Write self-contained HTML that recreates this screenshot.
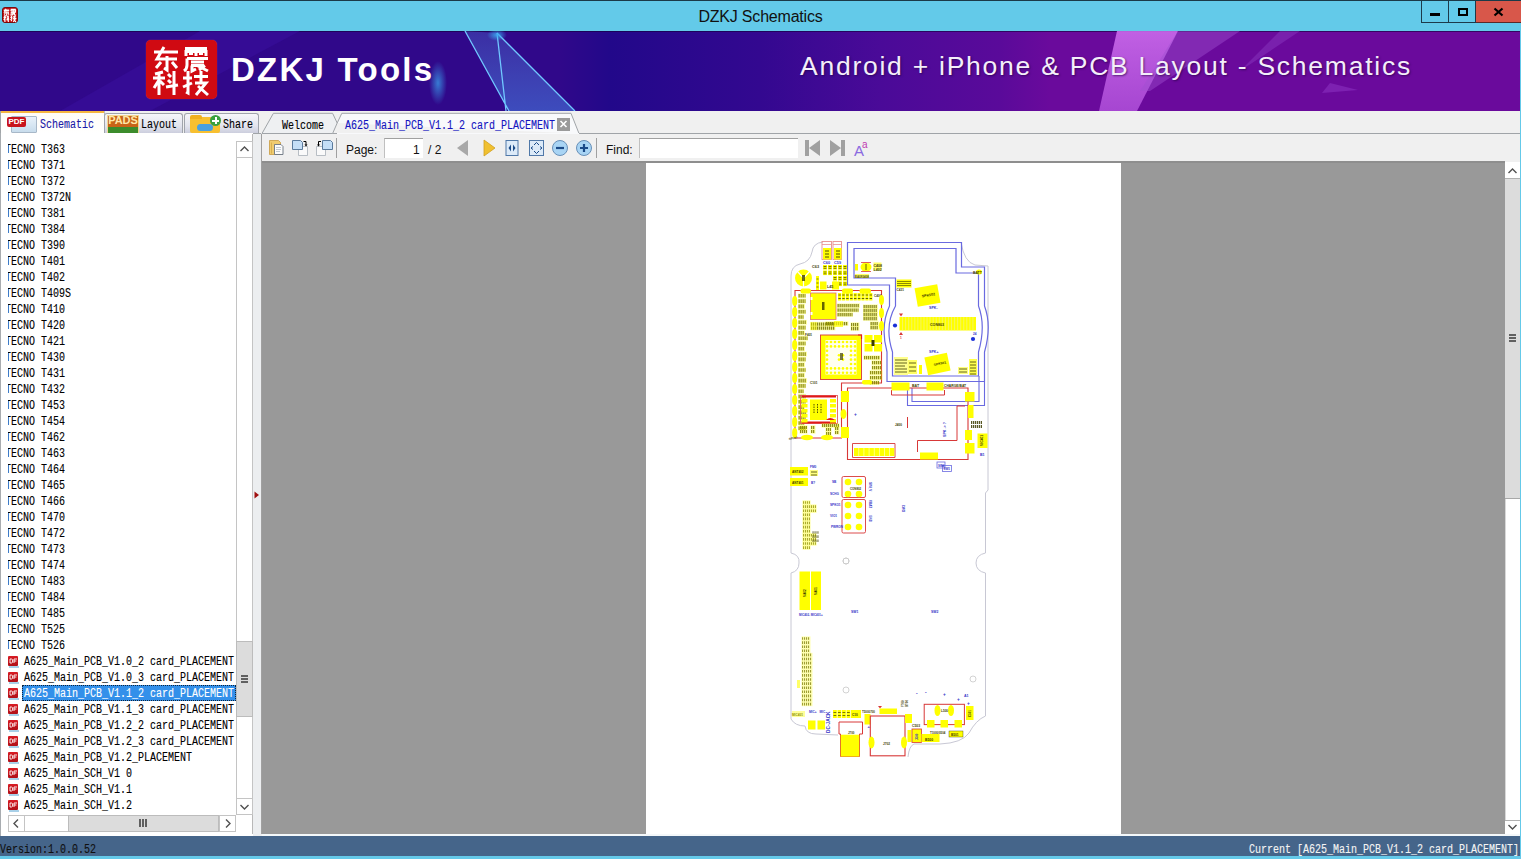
<!DOCTYPE html><html><head><meta charset="utf-8"><style>
*{margin:0;padding:0;box-sizing:border-box}
html,body{width:1521px;height:859px;overflow:hidden;background:#64c9e9;font-family:"Liberation Sans",sans-serif}
.a{position:absolute}
.m{font-family:"Liberation Mono",monospace;white-space:pre}
#title{left:0;top:0;width:1521px;height:31px;background:#63cae9;border-top:1px solid #1b3a48}
#banner{left:0;top:31px;width:1520px;height:80px;overflow:hidden;background:linear-gradient(90deg,#30088a 0,#30088a 560px,#22088a 610px,#330890 760px,#4a0a98 880px,#5a0a9a 1000px,#6a0a9c 1050px,#6a0a9c 1520px)}
#frame{left:0;top:111px;width:1520px;height:725px;background:#f0f0f0}
#status{left:0;top:836px;width:1520px;height:20px;background:#45658a}
.s{font-size:12px!important;letter-spacing:0!important;transform:scaleX(0.8333);transform-origin:0 0;-webkit-text-stroke:0.12px currentColor}
</style></head><body>
<div id="title" class="a">
<div class="a" style="left:2px;top:6px;width:16px;height:16px;background:#c00d12;border-radius:3px;border:1px solid #7a0a0a"></div>
<svg class="a" style="left:2px;top:6px" width="16" height="16" viewBox="0 0 71 59" preserveAspectRatio="none" fill="none" stroke="#fff" stroke-width="5"><g transform="translate(7,7)"><path d="M1 5H25M11 0L4 12H24M14 9V23L11 21M8 15L3 21M19 15L24 21"/></g><g transform="translate(37,7)"><path d="M2 1.5H24M3 9V4.5H23V9M13 1.5V9M4 11.5H25M4 11.5V18Q4 22 1 24M8 15H21M8 18.5H21M9 18.5V24M14 18.5L25 24"/></g><g transform="translate(7,31)"><path d="M10 1L2 3M0 7H12M6 1V24M6 9L1 17M15 3L18 6M15 9L18 12M13 16L25 14M21 0V24"/></g><g transform="translate(37,31)"><path d="M0 7H9M5 0V22M0 16L9 12M11 5.5H25M18 0V11M12 12H23L13 24M15 15L25 24"/></g></svg>
<div class="a" style="left:0;top:7px;width:1521px;text-align:center;font-size:16px;letter-spacing:-0.2px;color:#111;line-height:18px">DZKJ Schematics</div>
<div class="a" style="left:1421px;top:0;width:28px;height:22px;border:1px solid #1d3a4a;border-top:none"></div>
<div class="a" style="left:1449px;top:0;width:27px;height:22px;border-bottom:1px solid #1d3a4a;border-right:1px solid #1d3a4a"></div>
<div class="a" style="left:1476px;top:0;width:45px;height:22px;background:#d8574a;border-bottom:1px solid #5a2a2a"></div>
<div class="a" style="left:1430px;top:12px;width:10px;height:3px;background:#000"></div>
<div class="a" style="left:1458px;top:7px;width:10px;height:8px;border:2px solid #000;border-top-width:2.5px"></div>
<svg class="a" style="left:1493px;top:6px" width="11" height="10"><path d="M1.5 1.5L9.5 8.5M9.5 1.5L1.5 8.5" stroke="#000" stroke-width="2.2"/></svg>
</div>
<div id="banner" class="a">
<div class="a" style="left:0;top:0;width:1520px;height:1px;background:rgba(20,0,60,0.6)"></div>
<svg class="a" style="left:0;top:0" width="1520" height="80">
<defs>
<radialGradient id="glow1" cx="0.5" cy="0.5" r="0.5"><stop offset="0" stop-color="#3aa8f0" stop-opacity="0.9"/><stop offset="1" stop-color="#3aa8f0" stop-opacity="0"/></radialGradient>
<linearGradient id="beam1" x1="0" y1="0" x2="0" y2="1"><stop offset="0" stop-color="#5aa0f0" stop-opacity="0.25"/><stop offset="1" stop-color="#4a90f0" stop-opacity="0.5"/></linearGradient>
<linearGradient id="beam2" x1="0" y1="0" x2="0" y2="1"><stop offset="0" stop-color="#d070f0" stop-opacity="0.85"/><stop offset="1" stop-color="#c060e8" stop-opacity="0.7"/></linearGradient>
</defs>
<polygon points="200,0 300,0 150,80 60,80" fill="#3a10a0" opacity="0.5"/>
<polygon points="465,0 497,2 575,80 509,80" fill="url(#beam1)"/>
<path d="M465 0L509 80M497 2L506 80M497 2L575 80" stroke="#70c8ff" stroke-width="1.3" fill="none"/>
<ellipse cx="497" cy="4" rx="10" ry="6" fill="url(#glow1)"/>
<ellipse cx="438" cy="52" rx="9" ry="22" fill="url(#glow1)" opacity="0.8"/>
<polygon points="1117,0 1178,0 1137,80 1099,80" fill="url(#beam2)"/>
<polygon points="1178,0 1240,0 1150,60 1140,60" fill="#a050d0" opacity="0.45"/>
<polygon points="1280,0 1300,0 1240,40" fill="#9040c8" opacity="0.4"/>
<polygon points="1330,52 1358,59 1322,62" fill="#8a30c0" opacity="0.6"/>
</svg>
<div class="a" style="left:146px;top:9px;width:71px;height:59px;background:#d00a12;border-radius:5px;box-shadow:0 0 1px #f04050"></div>
<svg class="a" style="left:146px;top:9px" width="71" height="59" viewBox="0 0 71 59" fill="none" stroke="#fff" stroke-width="3" stroke-linecap="butt" stroke-linejoin="miter">
<g transform="translate(7,7)">
<path d="M1 5H25M11 0L4 12H24M14 9V23L11 21M8 15L3 21M19 15L24 21"/>
</g>
<g transform="translate(37,7)">
<path d="M2 1.5H24M3 9V4.5H23V9M13 1.5V9M6 6.5H10M16 6.5H20M4 11.5H25M4 11.5V18Q4 22 1 24M8 15H21M8 18.5H21M9 18.5V24L13 22M14 18.5L25 24M22 18.5L16 23"/>
</g>
<g transform="translate(7,31)">
<path d="M10 1L2 3M0 7H12M6 1V24M6 9L1 17M7 10L11 14M15 3L18 6M15 9L18 12M13 16L25 14M21 0V24"/>
</g>
<g transform="translate(37,31)">
<path d="M0 7H9M5 0V22L3 21M0 16L9 12M11 5.5H25M18 0V11M12 12H23L13 24M15 15L25 24"/>
</g>
</svg>
<div class="a" style="left:231px;top:18.5px;font-weight:bold;font-size:33px;letter-spacing:2.25px;color:#fff;line-height:40px">DZKJ Tools</div>
<div class="a" style="left:800px;top:19px;font-size:26.5px;letter-spacing:1.75px;color:#f4eefa;line-height:32px;text-shadow:1px 1px 2px rgba(30,0,60,0.6)">Android + iPhone &amp; PCB Layout - Schematics</div>
</div>
<div id="frame" class="a"></div>
<div class="a" style="left:262px;top:133px;width:1258px;height:1px;background:#a0a4a8"></div>
<div class="a" style="left:0;top:111px;width:105px;height:23px;background:linear-gradient(#fffdf6,#ffffff);border-left:1px solid #a0a4a8;border-right:1px solid #b8bcc0"></div>
<div class="a" style="left:1px;top:111px;width:103px;height:2px;background:#f5b640"></div>
<div class="a" style="left:104px;top:113px;width:79px;height:21px;background:linear-gradient(#f6f6fa,#e2e4ee 60%,#c9cbdb);border:1px solid #a0a4ac;border-bottom:none;border-radius:3px 3px 0 0"></div>
<div class="a" style="left:184px;top:113px;width:75px;height:21px;background:linear-gradient(#f6f6fa,#e2e4ee 60%,#c9cbdb);border:1px solid #a0a4ac;border-bottom:none;border-radius:3px 3px 0 0"></div>
<div class="a" style="left:105px;top:133px;width:156px;height:1px;background:#a0a4a8"></div>
<div class="a" style="left:11px;top:116px;width:26px;height:17px;background:linear-gradient(#e8f2fa,#c8dcec);border:1px solid #a8b8c8;border-radius:1px"></div>
<div class="a" style="left:7px;top:117px;width:19px;height:10px;background:#c8141c;border-radius:2px;color:#fff;font-size:8px;font-weight:bold;line-height:10px;text-align:center">PDF</div>
<div class="a m s" style="left:40px;top:117.5px;font-size:11px;letter-spacing:-0.6px;color:#1a1aa8;line-height:14px">Schematic</div>
<div class="a" style="left:107px;top:115px;width:32px;height:18px;background:#c86418;border:1px solid #f0d890"></div>
<div class="a" style="left:108px;top:127px;width:30px;height:6px;background:#3c8c2c"></div>
<div class="a" style="left:107px;top:114px;width:32px;font-size:11px;font-weight:bold;color:#ffe8a8;line-height:13px;text-align:center">PADS</div>
<div class="a m s" style="left:141px;top:118px;font-size:11px;letter-spacing:-0.6px;color:#000;line-height:14px">Layout</div>
<div class="a" style="left:190px;top:117px;width:30px;height:16px;background:#f8c030;border-radius:2px"></div>
<div class="a" style="left:190px;top:115px;width:12px;height:4px;background:#f0b020;border-radius:2px 2px 0 0"></div>
<div class="a" style="left:197px;top:124px;width:16px;height:7px;background:#4aa0e0;border-radius:4px"></div>
<div class="a" style="left:210px;top:115px;width:11px;height:11px;background:#3aa040;border-radius:50%"></div>
<div class="a" style="left:214.5px;top:117px;width:2px;height:7px;background:#fff"></div>
<div class="a" style="left:212px;top:119.5px;width:7px;height:2px;background:#fff"></div>
<div class="a m s" style="left:223px;top:118px;font-size:11px;letter-spacing:-0.6px;color:#000;line-height:14px">Share</div>
<svg class="a" style="left:255px;top:111px" width="340" height="24">
<path d="M7 22.5L18.4 2.3H77.6L82.2 12L77.6 22.5Z" fill="#eef0f2" stroke="#a0a4a8" stroke-width="1"/>
<path d="M82.2 12L86.8 2.3H316L324 22.5" fill="#f8f9fb" stroke="#a0a4a8" stroke-width="1"/>
<path d="M82 22.5H324" stroke="#f8f9fb" stroke-width="1.2"/>
</svg>
<div class="a m s" style="left:282px;top:118.5px;font-size:11px;letter-spacing:-0.6px;color:#000;line-height:14px">Welcome</div>
<div class="a m s" style="left:345px;top:118.5px;font-size:11px;letter-spacing:-0.6px;color:#1414c0;line-height:14px">A625_Main_PCB_V1.1_2 card_PLACEMENT</div>
<div class="a" style="left:557px;top:118px;width:13px;height:13px;background:#9a9a9a"></div>
<svg class="a" style="left:557px;top:118px" width="13" height="12"><path d="M3.5 3L9.5 9M9.5 3L3.5 9" stroke="#fff" stroke-width="1.6"/></svg>
<div class="a" style="left:0;top:133px;width:253px;height:703px;background:#fff;border-left:1px solid #a8acb0"></div>
<div class="a" style="left:252px;top:134px;width:1px;height:700px;background:#b8b8b8"></div>
<div class="a" style="left:253px;top:134px;width:8px;height:702px;background:#eceef0"></div>
<div class="a" style="left:261px;top:134px;width:1px;height:700px;background:#a0a0a0"></div>
<svg class="a" style="left:253px;top:490px" width="8" height="10"><path d="M1.5 1.5L6 5L1.5 8.5Z" fill="#a01010"/></svg>
<div class="a" style="left:8px;top:141px;width:228px;height:674px;overflow:hidden">
<div class="a m s" style="left:-3px;top:0.5px;font-size:11px;letter-spacing:-0.6px;line-height:16px">TECNO T363</div>
<div class="a m s" style="left:-3px;top:16.5px;font-size:11px;letter-spacing:-0.6px;line-height:16px">TECNO T371</div>
<div class="a m s" style="left:-3px;top:32.5px;font-size:11px;letter-spacing:-0.6px;line-height:16px">TECNO T372</div>
<div class="a m s" style="left:-3px;top:48.5px;font-size:11px;letter-spacing:-0.6px;line-height:16px">TECNO T372N</div>
<div class="a m s" style="left:-3px;top:64.5px;font-size:11px;letter-spacing:-0.6px;line-height:16px">TECNO T381</div>
<div class="a m s" style="left:-3px;top:80.5px;font-size:11px;letter-spacing:-0.6px;line-height:16px">TECNO T384</div>
<div class="a m s" style="left:-3px;top:96.5px;font-size:11px;letter-spacing:-0.6px;line-height:16px">TECNO T390</div>
<div class="a m s" style="left:-3px;top:112.5px;font-size:11px;letter-spacing:-0.6px;line-height:16px">TECNO T401</div>
<div class="a m s" style="left:-3px;top:128.5px;font-size:11px;letter-spacing:-0.6px;line-height:16px">TECNO T402</div>
<div class="a m s" style="left:-3px;top:144.5px;font-size:11px;letter-spacing:-0.6px;line-height:16px">TECNO T409S</div>
<div class="a m s" style="left:-3px;top:160.5px;font-size:11px;letter-spacing:-0.6px;line-height:16px">TECNO T410</div>
<div class="a m s" style="left:-3px;top:176.5px;font-size:11px;letter-spacing:-0.6px;line-height:16px">TECNO T420</div>
<div class="a m s" style="left:-3px;top:192.5px;font-size:11px;letter-spacing:-0.6px;line-height:16px">TECNO T421</div>
<div class="a m s" style="left:-3px;top:208.5px;font-size:11px;letter-spacing:-0.6px;line-height:16px">TECNO T430</div>
<div class="a m s" style="left:-3px;top:224.5px;font-size:11px;letter-spacing:-0.6px;line-height:16px">TECNO T431</div>
<div class="a m s" style="left:-3px;top:240.5px;font-size:11px;letter-spacing:-0.6px;line-height:16px">TECNO T432</div>
<div class="a m s" style="left:-3px;top:256.5px;font-size:11px;letter-spacing:-0.6px;line-height:16px">TECNO T453</div>
<div class="a m s" style="left:-3px;top:272.5px;font-size:11px;letter-spacing:-0.6px;line-height:16px">TECNO T454</div>
<div class="a m s" style="left:-3px;top:288.5px;font-size:11px;letter-spacing:-0.6px;line-height:16px">TECNO T462</div>
<div class="a m s" style="left:-3px;top:304.5px;font-size:11px;letter-spacing:-0.6px;line-height:16px">TECNO T463</div>
<div class="a m s" style="left:-3px;top:320.5px;font-size:11px;letter-spacing:-0.6px;line-height:16px">TECNO T464</div>
<div class="a m s" style="left:-3px;top:336.5px;font-size:11px;letter-spacing:-0.6px;line-height:16px">TECNO T465</div>
<div class="a m s" style="left:-3px;top:352.5px;font-size:11px;letter-spacing:-0.6px;line-height:16px">TECNO T466</div>
<div class="a m s" style="left:-3px;top:368.5px;font-size:11px;letter-spacing:-0.6px;line-height:16px">TECNO T470</div>
<div class="a m s" style="left:-3px;top:384.5px;font-size:11px;letter-spacing:-0.6px;line-height:16px">TECNO T472</div>
<div class="a m s" style="left:-3px;top:400.5px;font-size:11px;letter-spacing:-0.6px;line-height:16px">TECNO T473</div>
<div class="a m s" style="left:-3px;top:416.5px;font-size:11px;letter-spacing:-0.6px;line-height:16px">TECNO T474</div>
<div class="a m s" style="left:-3px;top:432.5px;font-size:11px;letter-spacing:-0.6px;line-height:16px">TECNO T483</div>
<div class="a m s" style="left:-3px;top:448.5px;font-size:11px;letter-spacing:-0.6px;line-height:16px">TECNO T484</div>
<div class="a m s" style="left:-3px;top:464.5px;font-size:11px;letter-spacing:-0.6px;line-height:16px">TECNO T485</div>
<div class="a m s" style="left:-3px;top:480.5px;font-size:11px;letter-spacing:-0.6px;line-height:16px">TECNO T525</div>
<div class="a m s" style="left:-3px;top:496.5px;font-size:11px;letter-spacing:-0.6px;line-height:16px">TECNO T526</div>
<div class="a" style="left:0;top:515px;width:10px;height:10px;background:linear-gradient(#d81c24,#b01018);border-radius:1px"></div>
<svg class="a" style="left:0;top:515px" width="10" height="10"><path d="M2 3v4M2 3h1.5q1.2 0 1.2 2t-1.2 2H2M6 3v4M6 3h3M6 5h2.4" stroke="#fff" stroke-width="0.9" fill="none"/></svg>
<div class="a" style="left:1px;top:525px;width:10px;height:2px;background:#a8d0e8"></div>
<div class="a m s" style="left:16px;top:512.5px;font-size:11px;letter-spacing:-0.6px;line-height:16px;color:#000">A625_Main_PCB_V1.0_2 card_PLACEMENT</div>
<div class="a" style="left:0;top:531px;width:10px;height:10px;background:linear-gradient(#d81c24,#b01018);border-radius:1px"></div>
<svg class="a" style="left:0;top:531px" width="10" height="10"><path d="M2 3v4M2 3h1.5q1.2 0 1.2 2t-1.2 2H2M6 3v4M6 3h3M6 5h2.4" stroke="#fff" stroke-width="0.9" fill="none"/></svg>
<div class="a" style="left:1px;top:541px;width:10px;height:2px;background:#a8d0e8"></div>
<div class="a m s" style="left:16px;top:528.5px;font-size:11px;letter-spacing:-0.6px;line-height:16px;color:#000">A625_Main_PCB_V1.0_3 card_PLACEMENT</div>
<div class="a" style="left:14px;top:544px;width:214px;height:16px;background:#3390ea;border:1px dotted #10243a"></div>
<div class="a" style="left:0;top:547px;width:10px;height:10px;background:linear-gradient(#d81c24,#b01018);border-radius:1px"></div>
<svg class="a" style="left:0;top:547px" width="10" height="10"><path d="M2 3v4M2 3h1.5q1.2 0 1.2 2t-1.2 2H2M6 3v4M6 3h3M6 5h2.4" stroke="#fff" stroke-width="0.9" fill="none"/></svg>
<div class="a" style="left:1px;top:557px;width:10px;height:2px;background:#a8d0e8"></div>
<div class="a m s" style="left:16px;top:544.5px;font-size:11px;letter-spacing:-0.6px;line-height:16px;color:#fff">A625_Main_PCB_V1.1_2 card_PLACEMENT</div>
<div class="a" style="left:0;top:563px;width:10px;height:10px;background:linear-gradient(#d81c24,#b01018);border-radius:1px"></div>
<svg class="a" style="left:0;top:563px" width="10" height="10"><path d="M2 3v4M2 3h1.5q1.2 0 1.2 2t-1.2 2H2M6 3v4M6 3h3M6 5h2.4" stroke="#fff" stroke-width="0.9" fill="none"/></svg>
<div class="a" style="left:1px;top:573px;width:10px;height:2px;background:#a8d0e8"></div>
<div class="a m s" style="left:16px;top:560.5px;font-size:11px;letter-spacing:-0.6px;line-height:16px;color:#000">A625_Main_PCB_V1.1_3 card_PLACEMENT</div>
<div class="a" style="left:0;top:579px;width:10px;height:10px;background:linear-gradient(#d81c24,#b01018);border-radius:1px"></div>
<svg class="a" style="left:0;top:579px" width="10" height="10"><path d="M2 3v4M2 3h1.5q1.2 0 1.2 2t-1.2 2H2M6 3v4M6 3h3M6 5h2.4" stroke="#fff" stroke-width="0.9" fill="none"/></svg>
<div class="a" style="left:1px;top:589px;width:10px;height:2px;background:#a8d0e8"></div>
<div class="a m s" style="left:16px;top:576.5px;font-size:11px;letter-spacing:-0.6px;line-height:16px;color:#000">A625_Main_PCB_V1.2_2 card_PLACEMENT</div>
<div class="a" style="left:0;top:595px;width:10px;height:10px;background:linear-gradient(#d81c24,#b01018);border-radius:1px"></div>
<svg class="a" style="left:0;top:595px" width="10" height="10"><path d="M2 3v4M2 3h1.5q1.2 0 1.2 2t-1.2 2H2M6 3v4M6 3h3M6 5h2.4" stroke="#fff" stroke-width="0.9" fill="none"/></svg>
<div class="a" style="left:1px;top:605px;width:10px;height:2px;background:#a8d0e8"></div>
<div class="a m s" style="left:16px;top:592.5px;font-size:11px;letter-spacing:-0.6px;line-height:16px;color:#000">A625_Main_PCB_V1.2_3 card_PLACEMENT</div>
<div class="a" style="left:0;top:611px;width:10px;height:10px;background:linear-gradient(#d81c24,#b01018);border-radius:1px"></div>
<svg class="a" style="left:0;top:611px" width="10" height="10"><path d="M2 3v4M2 3h1.5q1.2 0 1.2 2t-1.2 2H2M6 3v4M6 3h3M6 5h2.4" stroke="#fff" stroke-width="0.9" fill="none"/></svg>
<div class="a" style="left:1px;top:621px;width:10px;height:2px;background:#a8d0e8"></div>
<div class="a m s" style="left:16px;top:608.5px;font-size:11px;letter-spacing:-0.6px;line-height:16px;color:#000">A625_Main_PCB_V1.2_PLACEMENT</div>
<div class="a" style="left:0;top:627px;width:10px;height:10px;background:linear-gradient(#d81c24,#b01018);border-radius:1px"></div>
<svg class="a" style="left:0;top:627px" width="10" height="10"><path d="M2 3v4M2 3h1.5q1.2 0 1.2 2t-1.2 2H2M6 3v4M6 3h3M6 5h2.4" stroke="#fff" stroke-width="0.9" fill="none"/></svg>
<div class="a" style="left:1px;top:637px;width:10px;height:2px;background:#a8d0e8"></div>
<div class="a m s" style="left:16px;top:624.5px;font-size:11px;letter-spacing:-0.6px;line-height:16px;color:#000">A625_Main_SCH_V1 0</div>
<div class="a" style="left:0;top:643px;width:10px;height:10px;background:linear-gradient(#d81c24,#b01018);border-radius:1px"></div>
<svg class="a" style="left:0;top:643px" width="10" height="10"><path d="M2 3v4M2 3h1.5q1.2 0 1.2 2t-1.2 2H2M6 3v4M6 3h3M6 5h2.4" stroke="#fff" stroke-width="0.9" fill="none"/></svg>
<div class="a" style="left:1px;top:653px;width:10px;height:2px;background:#a8d0e8"></div>
<div class="a m s" style="left:16px;top:640.5px;font-size:11px;letter-spacing:-0.6px;line-height:16px;color:#000">A625_Main_SCH_V1.1</div>
<div class="a" style="left:0;top:659px;width:10px;height:10px;background:linear-gradient(#d81c24,#b01018);border-radius:1px"></div>
<svg class="a" style="left:0;top:659px" width="10" height="10"><path d="M2 3v4M2 3h1.5q1.2 0 1.2 2t-1.2 2H2M6 3v4M6 3h3M6 5h2.4" stroke="#fff" stroke-width="0.9" fill="none"/></svg>
<div class="a" style="left:1px;top:669px;width:10px;height:2px;background:#a8d0e8"></div>
<div class="a m s" style="left:16px;top:656.5px;font-size:11px;letter-spacing:-0.6px;line-height:16px;color:#000">A625_Main_SCH_V1.2</div>
</div>
<div class="a" style="left:236px;top:141px;width:17px;height:674px;background:#fff;border-left:1px solid #c4c4c4;border-right:1px solid #c4c4c4"></div>
<div class="a" style="left:236px;top:141px;width:17px;height:17px;border:1px solid #c4c4c4;background:#fff"></div>
<svg class="a" style="left:236px;top:141px" width="17" height="17"><path d="M4.5 10L8.5 6L12.5 10" stroke="#505050" stroke-width="1.4" fill="none"/></svg>
<div class="a" style="left:236px;top:798px;width:17px;height:17px;border:1px solid #c4c4c4;background:#fff"></div>
<svg class="a" style="left:236px;top:798px" width="17" height="17"><path d="M4.5 7L8.5 11L12.5 7" stroke="#505050" stroke-width="1.4" fill="none"/></svg>
<div class="a" style="left:236px;top:641px;width:17px;height:76px;background:#dcdcdc;border:1px solid #bcbcbc"></div>
<div class="a" style="left:241px;top:675px;width:7px;height:8px;background:repeating-linear-gradient(#606060 0 2px,transparent 2px 3px)"></div>
<div class="a" style="left:8px;top:815px;width:228px;height:17px;background:#fff;border:1px solid #c4c4c4"></div>
<div class="a" style="left:8px;top:815px;width:17px;height:17px;border:1px solid #c4c4c4;background:#fff"></div>
<svg class="a" style="left:8px;top:815px" width="17" height="17"><path d="M10 4.5L6 8.5L10 12.5" stroke="#505050" stroke-width="1.4" fill="none"/></svg>
<div class="a" style="left:219px;top:815px;width:17px;height:17px;border:1px solid #c4c4c4;background:#fff"></div>
<svg class="a" style="left:219px;top:815px" width="17" height="17"><path d="M7 4.5L11 8.5L7 12.5" stroke="#505050" stroke-width="1.4" fill="none"/></svg>
<div class="a" style="left:68px;top:815px;width:151px;height:17px;background:#dcdcdc;border:1px solid #bcbcbc"></div>
<div class="a" style="left:139px;top:819px;width:8px;height:8px;background:repeating-linear-gradient(90deg,#606060 0 2px,transparent 2px 3px)"></div>
<div class="a" style="left:262px;top:134px;width:1258px;height:27px;background:#f0f0f0"></div>
<div class="a" style="left:262px;top:161px;width:1243px;height:2px;background:#8e8e8e"></div>
<svg class="a" style="left:262px;top:134px" width="620" height="27">
<path d="M7.5 6.5H16.5L18.5 8.5V20.5H7.5Z" fill="#f0cc70" stroke="#c89a40" stroke-width="0.8"/>
 <path d="M9.5 8.5V19.5" stroke="#d8b050" stroke-width="1"/>
 <path d="M12.5 10.5H19L21 12.5V20.5H12.5Z" fill="#fcfcfc" stroke="#6a7480" stroke-width="0.9"/>
 <path d="M14 13.5h5M14 15.5h5M14 17.5h4" stroke="#a8b4c0" stroke-width="0.7"/>
 <path d="M36.5 12.5H45.5V21.5H36.5Z" fill="#fafafa" stroke="#a8b0b8" stroke-width="0.8"/>
 <path d="M30.5 6.5H38.5L40.5 8.5V15.5H30.5Z" fill="#c4def6" stroke="#5a7a9c" stroke-width="1"/>
 <path d="M41.5 7.5H44V11" stroke="#000" stroke-width="1" fill="none"/><path d="M42.5 10.5L44 12.5L45.5 10.5Z" fill="#000"/>
 <path d="M54.5 12.5H63.5V21.5H54.5Z" fill="#fafafa" stroke="#a8b0b8" stroke-width="0.8"/>
 <path d="M60.5 6.5H68.5L70.5 8.5V15.5H60.5Z" fill="#c4def6" stroke="#5a7a9c" stroke-width="1"/>
 <path d="M59 7.5H56.5V11" stroke="#000" stroke-width="1" fill="none"/><path d="M55 10.5L56.5 12.5L58 10.5Z" fill="#000"/>
<path d="M74.5 4V24" stroke="#a0a0a0" stroke-width="1"/>
<path d="M206 6L195 14L206 22Z" fill="#a8a8a8"/>
<path d="M222 6L233 14L222 22Z" fill="#f0c030" stroke="#d0a020" stroke-width="0.8"/>
<rect x="244" y="6.5" width="12" height="15" fill="#dceaf8" stroke="#5078a8" stroke-width="1"/>
<path d="M249 10.5L246.5 14L249 17.5ZM251 10.5L253.5 14L251 17.5Z" fill="#1a4a88"/>
<rect x="267.5" y="6.5" width="14" height="15" fill="#dceaf8" stroke="#5078a8" stroke-width="1"/>
<path d="M272 11l2.5-2.5l2.5 2.5M272 17l2.5 2.5l2.5-2.5M271 12.5l-2 1.5l2 1.5M278 12.5l2 1.5l-2 1.5" stroke="#1a4a88" stroke-width="1" fill="none"/>
<circle cx="298" cy="14" r="7.5" fill="#a8d4f4" stroke="#6890b8" stroke-width="1"/>
<path d="M294 14H302" stroke="#1a4a88" stroke-width="2.2"/>
<circle cx="322" cy="14" r="7.5" fill="#a8d4f4" stroke="#6890b8" stroke-width="1"/>
<path d="M318 14H326M322 10V18" stroke="#1a4a88" stroke-width="2.2"/>
<path d="M334.5 4V24" stroke="#a0a0a0" stroke-width="1"/>
<path d="M543 6h4v16h-4zM547 14L558 6V22Z" fill="#a0a0a0"/>
<path d="M579 6h4v16h-4zM579 14L568 6V22Z" fill="#a0a0a0"/>
<text x="592" y="22" font-size="15" fill="#8a6ae0" font-family="Liberation Sans">A</text>
<text x="600" y="14" font-size="10" fill="#c03ab0" font-family="Liberation Sans">a</text>
</svg>
<div class="a" style="left:346px;top:142.5px;font-size:12px;color:#111;line-height:14px">Page:</div>
<div class="a" style="left:384px;top:138px;width:39px;height:20px;background:#fff;border-top:1px solid #a0a0a0;border-left:1px solid #c0c0c0"></div>
<div class="a" style="left:413px;top:142.5px;font-size:12px;color:#111;line-height:14px">1</div>
<div class="a" style="left:428px;top:142.5px;font-size:12px;color:#111;line-height:14px">/ 2</div>
<div class="a" style="left:606px;top:142.5px;font-size:12px;color:#111;line-height:14px">Find:</div>
<div class="a" style="left:639px;top:138px;width:159px;height:20px;background:#fff;border-top:1px solid #a0a0a0;border-left:1px solid #c0c0c0"></div>
<div class="a" style="left:262px;top:163px;width:1243px;height:671px;background:#999999"></div>
<div class="a" style="left:646px;top:163px;width:475px;height:671px;background:#fff"></div>
<div class="a" style="left:262px;top:834px;width:1258px;height:2px;background:#f4f8fa"></div>
<div class="a" style="left:1505px;top:162px;width:15px;height:672px;background:#fff;border-left:1px solid #d8d8d8"></div>
<div class="a" style="left:1505px;top:162px;width:15px;height:17px;background:#fff;border-bottom:1px solid #b0b0b0"></div>
<svg class="a" style="left:1505px;top:162px" width="15" height="17"><path d="M3.5 11L7.5 7L11.5 11" stroke="#505050" stroke-width="1.4" fill="none"/></svg>
<div class="a" style="left:1505px;top:179px;width:15px;height:320px;background:#dcdcdc;border-bottom:1px solid #a8a8a8"></div>
<div class="a" style="left:1509px;top:334px;width:7px;height:8px;background:repeating-linear-gradient(#606060 0 2px,transparent 2px 3px)"></div>
<div class="a" style="left:1505px;top:820px;width:15px;height:14px;background:#fff;border-top:1px solid #b0b0b0"></div>
<svg class="a" style="left:1505px;top:820px" width="15" height="14"><path d="M3.5 5L7.5 9L11.5 5" stroke="#505050" stroke-width="1.4" fill="none"/></svg>
<svg class="a" style="left:646px;top:163px" width="475" height="671" viewBox="646 163 475 671" font-family="Liberation Sans">
<path d="M823 242Q813 243 812 252Q810 262 800 264Q791 266 791 276L791 553Q800 555 799 563Q799 571 791 573L791 719Q795 726 805 726Q806 734 816 734L838 735" fill="none" stroke="#c8c8d4" stroke-width="1"/>
<path d="M961 242Q964 262 975 265L988 266L988 490L985.5 493L985.5 553Q976 555 976 563Q976 571 985.5 573L985.5 716Q976 720 969 733Q962 743 940 744L914 744Q909 746 908 757" fill="none" stroke="#c8c8d4" stroke-width="1"/>
<path d="M847.5 242.5H961.5V267H984.5V306Q992 326 984.5 352V381.5H887V352Q880 326 889.5 306V285H847.5Z" fill="none" stroke="#6a6ae0" stroke-width="1.2"/>
<path d="M854 248.5H956V273H978.5V306Q986 326 978.5 352V376H892.5V352Q884 326 895.5 306V278H854Z" fill="none" stroke="#6a6ae0" stroke-width="1.2"/>
<path d="M907.5 388V405.5H984.5V381.5M912 388V401.5H979V376" fill="none" stroke="#6a6ae0" stroke-width="1.1"/>
<path d="M795 290.5H881.5V383H841.5V438H795Z" fill="none" stroke="#d83838" stroke-width="1.1"/>
<path d="M847.5 388H968V459.5H847.5Z" fill="none" stroke="#d83838" stroke-width="1.1"/>
<path d="M891.5 390V395H944.5V390" fill="none" stroke="#d83838" stroke-width="1"/>
<path d="M965 406H957V440.5H917.5V452" fill="none" stroke="#d83838" stroke-width="1"/>
<path d="M907.5 417V428" stroke="#d83838" stroke-width="1"/>
<rect x="822" y="241.5" width="9.5" height="18" fill="none" stroke="#e89090" stroke-width="0.9"/><rect x="833" y="241.5" width="8.5" height="18" fill="none" stroke="#e89090" stroke-width="0.9"/>
<path d="M822 244.5H831.5M833 244.5H841.5" stroke="#e89090" stroke-width="0.8"/>
<rect x="823" y="248" width="8" height="11.5" fill="#ffff00"/><rect x="834" y="248" width="7.5" height="11.5" fill="#ffff00"/>
<path d="M825 251h4M825 254h4M825 257h4M836 251h4M836 254h4M836 257h4" stroke="#3c3c00" stroke-width="0.9"/>
<text x="823" y="263.5" font-size="3.84" fill="#3434c8" font-weight="bold">C60</text>
<text x="834" y="263.5" font-size="3.84" fill="#3434c8" font-weight="bold">C59</text>
<text x="812" y="268" font-size="3.84" fill="#3c3c00" font-weight="bold">C63</text>
<rect x="823" y="265" width="4" height="4.6" fill="#ffff00"/>
<path d="M823.6 266.5h2.8M823.6 268.3h2.8" stroke="#3c3c00" stroke-width="0.7"/>
<rect x="823" y="270.5" width="4" height="4.6" fill="#ffff00"/>
<path d="M823.6 272.0h2.8M823.6 273.8h2.8" stroke="#3c3c00" stroke-width="0.7"/>
<rect x="828" y="265" width="4" height="4.6" fill="#ffff00"/>
<path d="M828.6 266.5h2.8M828.6 268.3h2.8" stroke="#3c3c00" stroke-width="0.7"/>
<rect x="828" y="270.5" width="4" height="4.6" fill="#ffff00"/>
<path d="M828.6 272.0h2.8M828.6 273.8h2.8" stroke="#3c3c00" stroke-width="0.7"/>
<rect x="833" y="265" width="4" height="4.6" fill="#ffff00"/>
<path d="M833.6 266.5h2.8M833.6 268.3h2.8" stroke="#3c3c00" stroke-width="0.7"/>
<rect x="833" y="270.5" width="4" height="4.6" fill="#ffff00"/>
<path d="M833.6 272.0h2.8M833.6 273.8h2.8" stroke="#3c3c00" stroke-width="0.7"/>
<rect x="833" y="276" width="4" height="4.6" fill="#ffff00"/>
<path d="M833.6 277.5h2.8M833.6 279.3h2.8" stroke="#3c3c00" stroke-width="0.7"/>
<rect x="833" y="281.5" width="4" height="4.6" fill="#ffff00"/>
<path d="M833.6 283.0h2.8M833.6 284.8h2.8" stroke="#3c3c00" stroke-width="0.7"/>
<rect x="838" y="265" width="4" height="4.6" fill="#ffff00"/>
<path d="M838.6 266.5h2.8M838.6 268.3h2.8" stroke="#3c3c00" stroke-width="0.7"/>
<rect x="838" y="270.5" width="4" height="4.6" fill="#ffff00"/>
<path d="M838.6 272.0h2.8M838.6 273.8h2.8" stroke="#3c3c00" stroke-width="0.7"/>
<rect x="838" y="276" width="4" height="4.6" fill="#ffff00"/>
<path d="M838.6 277.5h2.8M838.6 279.3h2.8" stroke="#3c3c00" stroke-width="0.7"/>
<rect x="838" y="281.5" width="4" height="4.6" fill="#ffff00"/>
<path d="M838.6 283.0h2.8M838.6 284.8h2.8" stroke="#3c3c00" stroke-width="0.7"/>
<rect x="843" y="265" width="4" height="4.6" fill="#ffff00"/>
<path d="M843.6 266.5h2.8M843.6 268.3h2.8" stroke="#3c3c00" stroke-width="0.7"/>
<rect x="843" y="270.5" width="4" height="4.6" fill="#ffff00"/>
<path d="M843.6 272.0h2.8M843.6 273.8h2.8" stroke="#3c3c00" stroke-width="0.7"/>
<rect x="843" y="276" width="4" height="4.6" fill="#ffff00"/>
<path d="M843.6 277.5h2.8M843.6 279.3h2.8" stroke="#3c3c00" stroke-width="0.7"/>
<rect x="843" y="281.5" width="4" height="4.6" fill="#ffff00"/>
<path d="M843.6 283.0h2.8M843.6 284.8h2.8" stroke="#3c3c00" stroke-width="0.7"/>
<circle cx="803.5" cy="278" r="8.5" fill="#ffff00"/>
<path d="M803.5 278L797 271M803.5 278L810 271M803.5 278V287" stroke="#fff" stroke-width="1.2"/>
<rect x="802" y="275" width="3" height="6" fill="#3c3c00" opacity="0.8"/>
<rect x="816" y="276" width="3" height="14" fill="#ffff00"/><path d="M816.5 279h2M816.5 283h2M816.5 287h2" stroke="#3c3c00" stroke-width="0.7"/>
<rect x="820" y="281.5" width="6.5" height="8" fill="#ffff00"/><rect x="832" y="281.5" width="7" height="8" fill="#ffff00"/>
<text x="827" y="287.5" font-size="3.5999999999999996" fill="#3c3c00" font-weight="bold">L45</text>
<rect x="800.5" y="288.5" width="10.5" height="5" rx="2" fill="#ffff00"/>
<rect x="842" y="288.5" width="11" height="5" rx="2" fill="#ffff00"/>
<rect x="859.5" y="288.5" width="11.5" height="5" rx="2" fill="#ffff00"/>
<rect x="855" y="264" width="3" height="6.5" fill="#ffff00"/>
<ellipse cx="866" cy="267" rx="5.5" ry="4.5" fill="#ffff00"/><path d="M861 262.5h10M861 271.5h10" stroke="#d83838" stroke-width="0.8"/><path d="M866 264v6" stroke="#3c3c00" stroke-width="0.8"/>
<rect x="873.5" y="262.5" width="8" height="8" fill="#ffff00" opacity="0.6"/>
<text x="873.5" y="266.5" font-size="3.5999999999999996" fill="#3c3c00" font-weight="bold">C408</text>
<text x="873.5" y="270.5" font-size="3.5999999999999996" fill="#3c3c00" font-weight="bold">L402</text>
<rect x="855" y="274" width="14" height="4" fill="#ffff00" opacity="0.6"/>
<text x="855" y="277.5" font-size="2.88" fill="#3c3c00" font-weight="bold">EA0X0408</text>
<rect x="896.5" y="279.5" width="15" height="8" fill="#ffff00"/>
<path d="M897 281.5h14M897 283.5h14M897 285.5h14" stroke="#3c3c00" stroke-width="0.6"/>
<text x="896.5" y="290.5" font-size="3.12" fill="#3c3c00" font-weight="bold">C431</text>
<rect x="916" y="286" width="23" height="19" fill="#ffff00" transform="rotate(-10 927.5 295.5)"/>
<text x="922" y="297.5" font-size="3.5999999999999996" fill="#3c3c00" font-weight="bold" transform="rotate(-10 922 297.5)">SPK502</text>
<text x="929" y="309" font-size="3.5999999999999996" fill="#3434c8" font-weight="bold">SPK-</text>
<rect x="899.5" y="317" width="76.5" height="13.5" fill="#ffff00"/>
<path d="M902.56 317v13.5M905.62 317v13.5M908.68 317v13.5M911.74 317v13.5M914.80 317v13.5M917.86 317v13.5M920.92 317v13.5M923.98 317v13.5M927.04 317v13.5M930.10 317v13.5M933.16 317v13.5M936.22 317v13.5M939.28 317v13.5M942.34 317v13.5M945.40 317v13.5M948.46 317v13.5M951.52 317v13.5M954.58 317v13.5M957.64 317v13.5M960.70 317v13.5M963.76 317v13.5M966.82 317v13.5M969.88 317v13.5M972.94 317v13.5" stroke="#f0f0a0" stroke-width="0.6"/>
<text x="930" y="325.5" font-size="3.5999999999999996" fill="#3c3c00" font-weight="bold">CON803</text>
<path d="M899 313.5h4l-2 3zM899 335h4l-2-3z" fill="#d83838"/>
<circle cx="895" cy="325.5" r="2.1" fill="#1a30d8"/><circle cx="973" cy="339" r="2.1" fill="#1a30d8"/>
<text x="973" y="335" font-size="3.12" fill="#3434c8" font-weight="bold">24</text>
<text x="900" y="339" font-size="3.12" fill="#d83838" font-weight="bold">1</text>
<ellipse cx="979" cy="272" rx="3" ry="2.5" fill="#ffff00"/>
<text x="973" y="273.5" font-size="3.36" fill="#3c3c00" font-weight="bold">BATT</text>
<text x="929" y="353" font-size="3.5999999999999996" fill="#3434c8" font-weight="bold">SPK+</text>
<rect x="926" y="355" width="23" height="18" fill="#ffff00" transform="rotate(-12 937.5 364)"/>
<text x="934" y="366" font-size="3.36" fill="#3c3c00" font-weight="bold" transform="rotate(-12 934 366)">SPK501</text>
<rect x="894" y="357" width="14" height="18" fill="#ffff00" opacity="0.45"/>
<path d="M895 360h12M895 363h12M895 366h10M895 369h12M895 372h12" stroke="#3c3c00" stroke-width="0.8"/>
<rect x="908" y="360" width="9" height="14" fill="#ffff00" opacity="0.6"/><path d="M909 363h7M909 367h7M909 371h7" stroke="#3c3c00" stroke-width="0.8"/>
<rect x="919" y="365" width="3" height="9" fill="#ffff00"/>
<rect x="969" y="359" width="8" height="16" fill="#ffff00" opacity="0.7"/><path d="M970 362h6M970 365h6M970 368h6M970 371h6M970 374h6" stroke="#3c3c00" stroke-width="0.8"/>
<rect x="958" y="367" width="10" height="7" fill="#ffff00" opacity="0.5"/><path d="M959 369h8M959 372h8" stroke="#3c3c00" stroke-width="0.8"/>
<ellipse cx="794.7" cy="301" rx="2.6" ry="5" fill="#ffff00"/>
<ellipse cx="794.7" cy="312" rx="2.6" ry="5" fill="#ffff00"/>
<ellipse cx="794.7" cy="323" rx="2.6" ry="5" fill="#ffff00"/>
<ellipse cx="794.7" cy="334" rx="2.6" ry="5" fill="#ffff00"/>
<ellipse cx="794.7" cy="345" rx="2.6" ry="5" fill="#ffff00"/>
<ellipse cx="794.7" cy="356" rx="2.6" ry="5" fill="#ffff00"/>
<ellipse cx="794.7" cy="367" rx="2.6" ry="5" fill="#ffff00"/>
<ellipse cx="794.7" cy="378" rx="2.6" ry="5" fill="#ffff00"/>
<ellipse cx="794.7" cy="389" rx="2.6" ry="5" fill="#ffff00"/>
<ellipse cx="794.7" cy="400" rx="2.6" ry="5" fill="#ffff00"/>
<ellipse cx="794.7" cy="411" rx="2.6" ry="5" fill="#ffff00"/>
<ellipse cx="794.7" cy="422" rx="2.6" ry="5" fill="#ffff00"/>
<ellipse cx="794.7" cy="433" rx="2.6" ry="5" fill="#ffff00"/>
<path d="M798.5 295.80h7" stroke="#3c3c00" stroke-width="3.6" stroke-dasharray="1.3 0.7" opacity="0.85"/>
<rect x="798" y="293.4" width="8" height="4.8" fill="#ffff00" opacity="0.35"/>
<path d="M798.5 301.10h7" stroke="#3c3c00" stroke-width="3.6" stroke-dasharray="1.3 0.7" opacity="0.85"/>
<rect x="798" y="298.7" width="8" height="4.8" fill="#ffff00" opacity="0.35"/>
<path d="M798.5 306.40h6" stroke="#3c3c00" stroke-width="3.6" stroke-dasharray="1.3 0.7" opacity="0.85"/>
<rect x="798" y="304.0" width="7" height="4.8" fill="#ffff00" opacity="0.35"/>
<path d="M798.5 311.70h7" stroke="#3c3c00" stroke-width="3.6" stroke-dasharray="1.3 0.7" opacity="0.85"/>
<rect x="798" y="309.3" width="8" height="4.8" fill="#ffff00" opacity="0.35"/>
<path d="M798.5 317.00h5" stroke="#3c3c00" stroke-width="3.6" stroke-dasharray="1.3 0.7" opacity="0.85"/>
<rect x="798" y="314.6" width="6" height="4.8" fill="#ffff00" opacity="0.35"/>
<path d="M798.5 322.30h8" stroke="#3c3c00" stroke-width="3.6" stroke-dasharray="1.3 0.7" opacity="0.85"/>
<rect x="798" y="319.9" width="9" height="4.8" fill="#ffff00" opacity="0.35"/>
<path d="M798.5 327.60h7" stroke="#3c3c00" stroke-width="3.6" stroke-dasharray="1.3 0.7" opacity="0.85"/>
<rect x="798" y="325.2" width="8" height="4.8" fill="#ffff00" opacity="0.35"/>
<path d="M798.5 332.90h6" stroke="#3c3c00" stroke-width="3.6" stroke-dasharray="1.3 0.7" opacity="0.85"/>
<rect x="798" y="330.5" width="7" height="4.8" fill="#ffff00" opacity="0.35"/>
<path d="M798.5 338.20h9" stroke="#3c3c00" stroke-width="3.6" stroke-dasharray="1.3 0.7" opacity="0.85"/>
<rect x="798" y="335.8" width="10" height="4.8" fill="#ffff00" opacity="0.35"/>
<path d="M798.5 343.50h7" stroke="#3c3c00" stroke-width="3.6" stroke-dasharray="1.3 0.7" opacity="0.85"/>
<rect x="798" y="341.1" width="8" height="4.8" fill="#ffff00" opacity="0.35"/>
<path d="M798.5 348.80h6" stroke="#3c3c00" stroke-width="3.6" stroke-dasharray="1.3 0.7" opacity="0.85"/>
<rect x="798" y="346.4" width="7" height="4.8" fill="#ffff00" opacity="0.35"/>
<path d="M798.5 354.10h8" stroke="#3c3c00" stroke-width="3.6" stroke-dasharray="1.3 0.7" opacity="0.85"/>
<rect x="798" y="351.7" width="9" height="4.8" fill="#ffff00" opacity="0.35"/>
<path d="M798.5 359.40h7" stroke="#3c3c00" stroke-width="3.6" stroke-dasharray="1.3 0.7" opacity="0.85"/>
<rect x="798" y="357.0" width="8" height="4.8" fill="#ffff00" opacity="0.35"/>
<path d="M798.5 364.70h6" stroke="#3c3c00" stroke-width="3.6" stroke-dasharray="1.3 0.7" opacity="0.85"/>
<rect x="798" y="362.3" width="7" height="4.8" fill="#ffff00" opacity="0.35"/>
<path d="M798.5 370.00h7" stroke="#3c3c00" stroke-width="3.6" stroke-dasharray="1.3 0.7" opacity="0.85"/>
<rect x="798" y="367.6" width="8" height="4.8" fill="#ffff00" opacity="0.35"/>
<path d="M798.5 375.30h6" stroke="#3c3c00" stroke-width="3.6" stroke-dasharray="1.3 0.7" opacity="0.85"/>
<rect x="798" y="372.9" width="7" height="4.8" fill="#ffff00" opacity="0.35"/>
<path d="M798.5 380.60h8" stroke="#3c3c00" stroke-width="3.6" stroke-dasharray="1.3 0.7" opacity="0.85"/>
<rect x="798" y="378.2" width="9" height="4.8" fill="#ffff00" opacity="0.35"/>
<path d="M798.5 385.90h7" stroke="#3c3c00" stroke-width="3.6" stroke-dasharray="1.3 0.7" opacity="0.85"/>
<rect x="798" y="383.5" width="8" height="4.8" fill="#ffff00" opacity="0.35"/>
<path d="M798.5 391.20h5" stroke="#3c3c00" stroke-width="3.6" stroke-dasharray="1.3 0.7" opacity="0.85"/>
<rect x="798" y="388.8" width="6" height="4.8" fill="#ffff00" opacity="0.35"/>
<path d="M798.5 396.50h7" stroke="#3c3c00" stroke-width="3.6" stroke-dasharray="1.3 0.7" opacity="0.85"/>
<rect x="798" y="394.1" width="8" height="4.8" fill="#ffff00" opacity="0.35"/>
<path d="M798.5 401.80h7" stroke="#3c3c00" stroke-width="3.6" stroke-dasharray="1.3 0.7" opacity="0.85"/>
<rect x="798" y="399.4" width="8" height="4.8" fill="#ffff00" opacity="0.35"/>
<path d="M798.5 407.10h6" stroke="#3c3c00" stroke-width="3.6" stroke-dasharray="1.3 0.7" opacity="0.85"/>
<rect x="798" y="404.7" width="7" height="4.8" fill="#ffff00" opacity="0.35"/>
<path d="M798.5 412.40h8" stroke="#3c3c00" stroke-width="3.6" stroke-dasharray="1.3 0.7" opacity="0.85"/>
<rect x="798" y="410.0" width="9" height="4.8" fill="#ffff00" opacity="0.35"/>
<path d="M798.5 417.70h7" stroke="#3c3c00" stroke-width="3.6" stroke-dasharray="1.3 0.7" opacity="0.85"/>
<rect x="798" y="415.3" width="8" height="4.8" fill="#ffff00" opacity="0.35"/>
<path d="M798.5 423.00h6" stroke="#3c3c00" stroke-width="3.6" stroke-dasharray="1.3 0.7" opacity="0.85"/>
<rect x="798" y="420.6" width="7" height="4.8" fill="#ffff00" opacity="0.35"/>
<path d="M798.5 428.30h7" stroke="#3c3c00" stroke-width="3.6" stroke-dasharray="1.3 0.7" opacity="0.85"/>
<rect x="798" y="425.9" width="8" height="4.8" fill="#ffff00" opacity="0.35"/>
<rect x="810.5" y="293" width="25.5" height="26.5" fill="#ffff00" stroke="#e07070" stroke-width="0.8"/>
<rect x="810.5" y="297" width="2" height="3" fill="#fff"/><rect x="810.5" y="312" width="2" height="3" fill="#fff"/>
<rect x="822" y="302" width="2.5" height="8" fill="#3c3c00" opacity="0.8"/>
<rect x="838.0" y="293" width="3.2" height="7.5" fill="#ffff00"/><path d="M838.4 295h2.4M838.4 298.5h2.4" stroke="#3c3c00" stroke-width="0.8"/>
<rect x="841.9" y="293" width="3.2" height="7.5" fill="#ffff00"/><path d="M842.3 295h2.4M842.3 298.5h2.4" stroke="#3c3c00" stroke-width="0.8"/>
<rect x="845.8" y="293" width="3.2" height="7.5" fill="#ffff00"/><path d="M846.2 295h2.4M846.2 298.5h2.4" stroke="#3c3c00" stroke-width="0.8"/>
<rect x="849.7" y="293" width="3.2" height="7.5" fill="#ffff00"/><path d="M850.1 295h2.4M850.1 298.5h2.4" stroke="#3c3c00" stroke-width="0.8"/>
<rect x="853.6" y="293" width="3.2" height="7.5" fill="#ffff00"/><path d="M854.0 295h2.4M854.0 298.5h2.4" stroke="#3c3c00" stroke-width="0.8"/>
<rect x="857.5" y="293" width="3.2" height="7.5" fill="#ffff00"/><path d="M857.9 295h2.4M857.9 298.5h2.4" stroke="#3c3c00" stroke-width="0.8"/>
<rect x="861.4" y="293" width="3.2" height="7.5" fill="#ffff00"/><path d="M861.8 295h2.4M861.8 298.5h2.4" stroke="#3c3c00" stroke-width="0.8"/>
<rect x="865.3" y="293" width="3.2" height="7.5" fill="#ffff00"/><path d="M865.7 295h2.4M865.7 298.5h2.4" stroke="#3c3c00" stroke-width="0.8"/>
<rect x="869.2" y="293" width="3.2" height="7.5" fill="#ffff00"/><path d="M869.6 295h2.4M869.6 298.5h2.4" stroke="#3c3c00" stroke-width="0.8"/>
<text x="874" y="297" font-size="3.12" fill="#3c3c00" font-weight="bold">C406</text>
<path d="M837.5 305.60h22" stroke="#3c3c00" stroke-width="3.2" stroke-dasharray="1.3 0.7" opacity="0.85"/>
<rect x="837.0" y="303.3" width="23" height="4.6" fill="#ffff00" opacity="0.3"/>
<path d="M837.5 310.10h21" stroke="#3c3c00" stroke-width="3.2" stroke-dasharray="1.3 0.7" opacity="0.85"/>
<rect x="837.0" y="307.8" width="22" height="4.6" fill="#ffff00" opacity="0.3"/>
<path d="M837.5 314.60h15" stroke="#3c3c00" stroke-width="3.2" stroke-dasharray="1.3 0.7" opacity="0.85"/>
<rect x="837.0" y="312.3" width="16" height="4.6" fill="#ffff00" opacity="0.3"/>
<path d="M863.5 306.60h14" stroke="#3c3c00" stroke-width="3.2" stroke-dasharray="1.3 0.7" opacity="0.85"/>
<rect x="863.0" y="304.3" width="15" height="4.6" fill="#ffff00" opacity="0.3"/>
<path d="M863.5 310.60h14" stroke="#3c3c00" stroke-width="3.2" stroke-dasharray="1.3 0.7" opacity="0.85"/>
<rect x="863.0" y="308.3" width="15" height="4.6" fill="#ffff00" opacity="0.3"/>
<path d="M863.5 314.60h14" stroke="#3c3c00" stroke-width="3.2" stroke-dasharray="1.3 0.7" opacity="0.85"/>
<rect x="863.0" y="312.3" width="15" height="4.6" fill="#ffff00" opacity="0.3"/>
<path d="M863.5 318.60h14" stroke="#3c3c00" stroke-width="3.2" stroke-dasharray="1.3 0.7" opacity="0.85"/>
<rect x="863.0" y="316.3" width="15" height="4.6" fill="#ffff00" opacity="0.3"/>
<path d="M811 324.10h24" stroke="#3c3c00" stroke-width="3.2" stroke-dasharray="1.3 0.7" opacity="0.85"/>
<rect x="810.5" y="321.8" width="25" height="4.6" fill="#ffff00" opacity="0.3"/>
<path d="M811 328.10h24" stroke="#3c3c00" stroke-width="3.2" stroke-dasharray="1.3 0.7" opacity="0.85"/>
<rect x="810.5" y="325.8" width="25" height="4.6" fill="#ffff00" opacity="0.3"/>
<path d="M826 323.60h22" stroke="#3c3c00" stroke-width="3.2" stroke-dasharray="1.3 0.7" opacity="0.85"/>
<rect x="825.5" y="321.3" width="23" height="4.6" fill="#ffff00" opacity="0.3"/>
<path d="M851 324.60h8" stroke="#3c3c00" stroke-width="3.2" stroke-dasharray="1.3 0.7" opacity="0.85"/>
<rect x="850.5" y="322.3" width="9" height="4.6" fill="#ffff00" opacity="0.3"/>
<path d="M851 328.60h8" stroke="#3c3c00" stroke-width="3.2" stroke-dasharray="1.3 0.7" opacity="0.85"/>
<rect x="850.5" y="326.3" width="9" height="4.6" fill="#ffff00" opacity="0.3"/>
<path d="M870.5 323.60h8" stroke="#3c3c00" stroke-width="3.2" stroke-dasharray="1.3 0.7" opacity="0.85"/>
<rect x="870.0" y="321.3" width="9" height="4.6" fill="#ffff00" opacity="0.3"/>
<path d="M870.5 327.60h8" stroke="#3c3c00" stroke-width="3.2" stroke-dasharray="1.3 0.7" opacity="0.85"/>
<rect x="870.0" y="325.3" width="9" height="4.6" fill="#ffff00" opacity="0.3"/>
<rect x="810" y="322" width="7" height="8" fill="#ffff00" opacity="0.4"/><rect x="834" y="321" width="9" height="6" fill="#ffff00" opacity="0.7"/>
<ellipse cx="881.5" cy="300" rx="2.5" ry="5" fill="#ffff00"/>
<ellipse cx="881.5" cy="313" rx="2.5" ry="5" fill="#ffff00"/>
<ellipse cx="881.5" cy="326" rx="2.5" ry="5" fill="#ffff00"/>
<rect x="820.5" y="335" width="41" height="44.5" fill="#ffff00" stroke="#d83838" stroke-width="0.9"/>
<rect x="825.5" y="340" width="31" height="34.5" fill="#fffff0"/>
<g fill="#ffff00"><circle cx="827" cy="342.0" r="1.3"/><circle cx="827" cy="346.4" r="1.3"/><circle cx="827" cy="350.8" r="1.3"/><circle cx="827" cy="355.2" r="1.3"/><circle cx="827" cy="359.6" r="1.3"/><circle cx="827" cy="364.0" r="1.3"/><circle cx="827" cy="368.4" r="1.3"/><circle cx="827" cy="372.8" r="1.3"/><circle cx="831" cy="342.0" r="1.3"/><circle cx="831" cy="346.4" r="1.3"/><circle cx="831" cy="368.4" r="1.3"/><circle cx="831" cy="372.8" r="1.3"/><circle cx="835" cy="342.0" r="1.3"/><circle cx="835" cy="346.4" r="1.3"/><circle cx="835" cy="368.4" r="1.3"/><circle cx="835" cy="372.8" r="1.3"/><circle cx="839" cy="342.0" r="1.3"/><circle cx="839" cy="346.4" r="1.3"/><circle cx="839" cy="355.2" r="1.3"/><circle cx="839" cy="359.6" r="1.3"/><circle cx="839" cy="368.4" r="1.3"/><circle cx="839" cy="372.8" r="1.3"/><circle cx="843" cy="342.0" r="1.3"/><circle cx="843" cy="346.4" r="1.3"/><circle cx="843" cy="355.2" r="1.3"/><circle cx="843" cy="359.6" r="1.3"/><circle cx="843" cy="368.4" r="1.3"/><circle cx="843" cy="372.8" r="1.3"/><circle cx="847" cy="342.0" r="1.3"/><circle cx="847" cy="346.4" r="1.3"/><circle cx="847" cy="368.4" r="1.3"/><circle cx="847" cy="372.8" r="1.3"/><circle cx="851" cy="342.0" r="1.3"/><circle cx="851" cy="346.4" r="1.3"/><circle cx="851" cy="350.8" r="1.3"/><circle cx="851" cy="355.2" r="1.3"/><circle cx="851" cy="359.6" r="1.3"/><circle cx="851" cy="364.0" r="1.3"/><circle cx="851" cy="368.4" r="1.3"/><circle cx="851" cy="372.8" r="1.3"/><circle cx="855" cy="342.0" r="1.3"/><circle cx="855" cy="346.4" r="1.3"/><circle cx="855" cy="350.8" r="1.3"/><circle cx="855" cy="355.2" r="1.3"/><circle cx="855" cy="359.6" r="1.3"/><circle cx="855" cy="364.0" r="1.3"/><circle cx="855" cy="368.4" r="1.3"/><circle cx="855" cy="372.8" r="1.3"/></g>
<path d="M858 335h3.5v4" stroke="#e02020" stroke-width="1.2" fill="none"/>
<rect x="840" y="353" width="3" height="7" fill="#3c3c00" opacity="0.7"/>
<rect x="864.5" y="335" width="8" height="7.5" fill="#ffff00"/><rect x="874" y="335" width="8" height="7.5" fill="#ffff00"/><rect x="864.5" y="344" width="8" height="7.5" fill="#ffff00"/><rect x="874" y="344" width="8" height="7.5" fill="#ffff00"/>
<rect x="871.5" y="340" width="3" height="6" fill="#3c3c00"/>
<path d="M864 357.65h16" stroke="#3c3c00" stroke-width="3.3" stroke-dasharray="1.3 0.7" opacity="0.85"/>
<rect x="863.5" y="355.3" width="17" height="4.7" fill="#ffff00" opacity="0.35"/>
<path d="M872 362.65h9" stroke="#3c3c00" stroke-width="3.3" stroke-dasharray="1.3 0.7" opacity="0.85"/>
<rect x="871.5" y="360.3" width="10" height="4.7" fill="#ffff00" opacity="0.35"/>
<path d="M872 367.65h9" stroke="#3c3c00" stroke-width="3.3" stroke-dasharray="1.3 0.7" opacity="0.85"/>
<rect x="871.5" y="365.3" width="10" height="4.7" fill="#ffff00" opacity="0.35"/>
<path d="M870 372.65h12" stroke="#3c3c00" stroke-width="3.3" stroke-dasharray="1.3 0.7" opacity="0.85"/>
<rect x="869.5" y="370.3" width="13" height="4.7" fill="#ffff00" opacity="0.35"/>
<path d="M870 377.65h12" stroke="#3c3c00" stroke-width="3.3" stroke-dasharray="1.3 0.7" opacity="0.85"/>
<rect x="869.5" y="375.3" width="13" height="4.7" fill="#ffff00" opacity="0.35"/>
<path d="M870 382.65h9" stroke="#3c3c00" stroke-width="3.3" stroke-dasharray="1.3 0.7" opacity="0.85"/>
<rect x="869.5" y="380.3" width="10" height="4.7" fill="#ffff00" opacity="0.35"/>
<rect x="862" y="380" width="10" height="4.5" rx="2" fill="#ffff00"/>
<text x="805" y="336" font-size="3.12" fill="#3c3c00" font-weight="bold">F401</text>
<text x="810" y="384" font-size="3.12" fill="#3c3c00" font-weight="bold">C101</text>
<rect x="800.5" y="395.5" width="37" height="28" fill="none" stroke="#e06060" stroke-width="0.9"/>
<path d="M802 396.5H836M802 422.5H836" stroke="#e01818" stroke-width="1.8"/>
<rect x="810" y="399.5" width="17" height="20.5" fill="#ffff00"/>
<path d="M814 404v10M817.5 404v10M821 404v10" stroke="#3c3c00" stroke-width="0.9" stroke-dasharray="1.5 1"/>
<rect x="801.5" y="399" width="6" height="3.5" fill="#ffff00"/><rect x="830" y="399" width="6" height="3.5" fill="#ffff00"/>
<rect x="801.5" y="404" width="6" height="3.5" fill="#ffff00"/><rect x="830" y="404" width="6" height="3.5" fill="#ffff00"/>
<rect x="801.5" y="409" width="6" height="3.5" fill="#ffff00"/><rect x="830" y="409" width="6" height="3.5" fill="#ffff00"/>
<rect x="801.5" y="414" width="6" height="3.5" fill="#ffff00"/><rect x="830" y="414" width="6" height="3.5" fill="#ffff00"/>
<rect x="801.5" y="419" width="6" height="3.5" fill="#ffff00"/><rect x="830" y="419" width="6" height="3.5" fill="#ffff00"/>
<path d="M826 420q4 -4 9 0" fill="#e01818"/>
<path d="M800 427.50h7" stroke="#3c3c00" stroke-width="3" stroke-dasharray="1.3 0.7" opacity="0.85"/>
<rect x="799.5" y="425.3" width="8" height="4.4" fill="#ffff00" opacity="0.35"/>
<path d="M800 431.50h7" stroke="#3c3c00" stroke-width="3" stroke-dasharray="1.3 0.7" opacity="0.85"/>
<rect x="799.5" y="429.3" width="8" height="4.4" fill="#ffff00" opacity="0.35"/>
<path d="M811 427.50h4" stroke="#3c3c00" stroke-width="3" stroke-dasharray="1.3 0.7" opacity="0.85"/>
<rect x="810.5" y="425.3" width="5" height="4.4" fill="#ffff00" opacity="0.35"/>
<path d="M811 431.50h4" stroke="#3c3c00" stroke-width="3" stroke-dasharray="1.3 0.7" opacity="0.85"/>
<rect x="810.5" y="429.3" width="5" height="4.4" fill="#ffff00" opacity="0.35"/>
<path d="M822 425.50h17" stroke="#3c3c00" stroke-width="3" stroke-dasharray="1.3 0.7" opacity="0.85"/>
<rect x="821.5" y="423.3" width="18" height="4.4" fill="#ffff00" opacity="0.35"/>
<path d="M826 429.50h5" stroke="#3c3c00" stroke-width="3" stroke-dasharray="1.3 0.7" opacity="0.85"/>
<rect x="825.5" y="427.3" width="6" height="4.4" fill="#ffff00" opacity="0.35"/>
<path d="M826 433.50h5" stroke="#3c3c00" stroke-width="3" stroke-dasharray="1.3 0.7" opacity="0.85"/>
<rect x="825.5" y="431.3" width="6" height="4.4" fill="#ffff00" opacity="0.35"/>
<path d="M835 428.50h4" stroke="#3c3c00" stroke-width="3" stroke-dasharray="1.3 0.7" opacity="0.85"/>
<rect x="834.5" y="426.3" width="5" height="4.4" fill="#ffff00" opacity="0.35"/>
<path d="M835 432.50h4" stroke="#3c3c00" stroke-width="3" stroke-dasharray="1.3 0.7" opacity="0.85"/>
<rect x="834.5" y="430.3" width="5" height="4.4" fill="#ffff00" opacity="0.35"/>
<rect x="841" y="391" width="8" height="11" fill="#ffff00"/><ellipse cx="843.5" cy="414" rx="3" ry="5" fill="#ffff00"/><rect x="841" y="427" width="8" height="11" fill="#ffff00"/>
<ellipse cx="807" cy="437.5" rx="6" ry="2.7" fill="#ffff00"/><ellipse cx="827" cy="437.5" rx="6" ry="2.7" fill="#ffff00"/>
<text x="789" y="440" font-size="2.88" fill="#3c3c00" font-weight="bold" transform="rotate(-10 789 440)">GPIO?</text>
<path d="M852.5 443.5H895V457.5H852.5Z" fill="none" stroke="#d83838" stroke-width="0.9"/>
<rect x="854.0" y="448" width="4.6" height="8" fill="#ffff00"/>
<rect x="859.1" y="448" width="4.6" height="8" fill="#ffff00"/>
<rect x="864.2" y="448" width="4.6" height="8" fill="#ffff00"/>
<rect x="869.3" y="448" width="4.6" height="8" fill="#ffff00"/>
<rect x="874.4" y="448" width="4.6" height="8" fill="#ffff00"/>
<rect x="879.5" y="448" width="4.6" height="8" fill="#ffff00"/>
<rect x="884.6" y="448" width="4.6" height="8" fill="#ffff00"/>
<rect x="889.7" y="448" width="4.6" height="8" fill="#ffff00"/>
<text x="854" y="416" font-size="4.8" fill="#3434c8" font-weight="bold">+</text>
<text x="895" y="426" font-size="3.12" fill="#3c3c00" font-weight="bold">J400</text>
<rect x="891.5" y="382.5" width="18" height="8" fill="#ffff00"/><rect x="926.5" y="382.5" width="17" height="8" fill="#ffff00"/>
<text x="912" y="386.5" font-size="3.5999999999999996" fill="#3c3c00" font-weight="bold">BAT</text>
<text x="944" y="386.5" font-size="3.36" fill="#3c3c00" font-weight="bold">CHARGE/BAT</text>
<rect x="965" y="392" width="9.5" height="9.5" fill="#ffff00"/><rect x="968" y="405" width="5.5" height="13" fill="#ffff00"/><rect x="965" y="430" width="7" height="10" fill="#ffff00"/><rect x="965" y="443" width="9.5" height="10.5" fill="#ffff00"/>
<path d="M971 422.50h11" stroke="#3c3c00" stroke-width="3" stroke-dasharray="1.3 0.7" opacity="0.85"/>
<path d="M971 426.50h11" stroke="#3c3c00" stroke-width="3" stroke-dasharray="1.3 0.7" opacity="0.85"/>
<rect x="977.5" y="433.5" width="10" height="14.5" fill="#ffff00"/>
<text x="983" y="446" font-size="3.12" fill="#3c3c00" font-weight="bold" transform="rotate(-90 983 446)">MIC401</text>
<text x="980" y="456" font-size="3.5999999999999996" fill="#3434c8" font-weight="bold">B1</text>
<text x="946" y="437" font-size="3.5999999999999996" fill="#3434c8" font-weight="bold" transform="rotate(-90 946 437)">SPK -&gt; ?</text>
<rect x="920" y="452.5" width="18" height="7" fill="#ffff00"/>
<rect x="937" y="462" width="8" height="6" fill="none" stroke="#6a6ae0" stroke-width="0.8"/><rect x="942.5" y="465.5" width="9" height="6" fill="none" stroke="#6a6ae0" stroke-width="0.8"/>
<text x="938" y="466.5" font-size="2.88" fill="#3434c8" font-weight="bold">SW4</text>
<text x="943.5" y="470" font-size="2.88" fill="#3434c8" font-weight="bold">SW5</text>
<rect x="790" y="467" width="18" height="8.5" fill="#ffff00"/><rect x="790" y="478" width="18" height="8" fill="#ffff00"/>
<text x="792" y="473" font-size="3.12" fill="#3c3c00" font-weight="bold">ANT402</text>
<text x="792" y="484" font-size="3.12" fill="#3c3c00" font-weight="bold">ANT401</text>
<text x="810" y="468" font-size="3.12" fill="#3434c8" font-weight="bold">FM0</text>
<rect x="810" y="470" width="8" height="6" fill="#ffff00" opacity="0.5"/><path d="M811 472h6M811 475h6" stroke="#3c3c00" stroke-width="0.8"/>
<text x="811" y="484" font-size="3.12" fill="#3434c8" font-weight="bold">B?</text>
<rect x="842" y="476.5" width="23.5" height="21" rx="1.5" fill="none" stroke="#d83838" stroke-width="0.9"/>
<rect x="842" y="499.5" width="23.5" height="33.5" rx="1.5" fill="none" stroke="#d83838" stroke-width="0.9"/>
<circle cx="848" cy="482" r="3.3" fill="#ffff00"/>
<circle cx="859" cy="482" r="3.3" fill="#ffff00"/>
<circle cx="848" cy="494" r="3.3" fill="#ffff00"/>
<circle cx="859" cy="494" r="3.3" fill="#ffff00"/>
<circle cx="848" cy="505" r="3.3" fill="#ffff00"/>
<circle cx="859" cy="505" r="3.3" fill="#ffff00"/>
<circle cx="848" cy="516" r="3.3" fill="#ffff00"/>
<circle cx="859" cy="516" r="3.3" fill="#ffff00"/>
<circle cx="848" cy="527" r="3.3" fill="#ffff00"/>
<circle cx="859" cy="527" r="3.3" fill="#ffff00"/>
<text x="850" y="490" font-size="2.88" fill="#3c3c00" font-weight="bold">CON802</text>
<text x="832" y="483" font-size="3.12" fill="#3434c8" font-weight="bold">SB</text>
<text x="830" y="495" font-size="3.12" fill="#3434c8" font-weight="bold">SCHG</text>
<text x="830" y="506" font-size="3.12" fill="#3434c8" font-weight="bold">SPKO1</text>
<text x="830" y="517" font-size="3.12" fill="#3434c8" font-weight="bold">VIO1</text>
<text x="831" y="528" font-size="3.12" fill="#3434c8" font-weight="bold">PWRON</text>
<text x="869" y="482" font-size="3.12" fill="#3434c8" font-weight="bold" transform="rotate(90 869 482)">SIM_V</text>
<text x="869" y="500" font-size="3.12" fill="#3434c8" font-weight="bold" transform="rotate(90 869 500)">VBAT</text>
<text x="869" y="515" font-size="3.12" fill="#3434c8" font-weight="bold" transform="rotate(90 869 515)">GND</text>
<text x="905" y="512" font-size="3.36" fill="#3434c8" font-weight="bold" transform="rotate(-90 905 512)">DM3</text>
<path d="M803 502.50h7" stroke="#3c3c00" stroke-width="2.6" stroke-dasharray="1.1 0.9" opacity="0.7"/>
<rect x="802.5" y="500.4" width="8" height="4.2" fill="#ffff00" opacity="0.4"/>
<path d="M803 506.60h13" stroke="#3c3c00" stroke-width="2.6" stroke-dasharray="1.1 0.9" opacity="0.7"/>
<rect x="802.5" y="504.5" width="14" height="4.2" fill="#ffff00" opacity="0.4"/>
<path d="M803 510.70h13" stroke="#3c3c00" stroke-width="2.6" stroke-dasharray="1.1 0.9" opacity="0.7"/>
<rect x="802.5" y="508.6" width="14" height="4.2" fill="#ffff00" opacity="0.4"/>
<path d="M803 514.80h7" stroke="#3c3c00" stroke-width="2.6" stroke-dasharray="1.1 0.9" opacity="0.7"/>
<rect x="802.5" y="512.7" width="8" height="4.2" fill="#ffff00" opacity="0.4"/>
<path d="M803 518.90h7" stroke="#3c3c00" stroke-width="2.6" stroke-dasharray="1.1 0.9" opacity="0.7"/>
<rect x="802.5" y="516.8" width="8" height="4.2" fill="#ffff00" opacity="0.4"/>
<path d="M803 523.00h7" stroke="#3c3c00" stroke-width="2.6" stroke-dasharray="1.1 0.9" opacity="0.7"/>
<rect x="802.5" y="520.9" width="8" height="4.2" fill="#ffff00" opacity="0.4"/>
<path d="M803 527.10h7" stroke="#3c3c00" stroke-width="2.6" stroke-dasharray="1.1 0.9" opacity="0.7"/>
<rect x="802.5" y="525.0" width="8" height="4.2" fill="#ffff00" opacity="0.4"/>
<path d="M803 531.20h7" stroke="#3c3c00" stroke-width="2.6" stroke-dasharray="1.1 0.9" opacity="0.7"/>
<rect x="802.5" y="529.1" width="8" height="4.2" fill="#ffff00" opacity="0.4"/>
<path d="M803 535.30h13" stroke="#3c3c00" stroke-width="2.6" stroke-dasharray="1.1 0.9" opacity="0.7"/>
<rect x="802.5" y="533.2" width="14" height="4.2" fill="#ffff00" opacity="0.4"/>
<path d="M803 539.40h13" stroke="#3c3c00" stroke-width="2.6" stroke-dasharray="1.1 0.9" opacity="0.7"/>
<rect x="802.5" y="537.3" width="14" height="4.2" fill="#ffff00" opacity="0.4"/>
<path d="M803 543.50h13" stroke="#3c3c00" stroke-width="2.6" stroke-dasharray="1.1 0.9" opacity="0.7"/>
<rect x="802.5" y="541.4" width="14" height="4.2" fill="#ffff00" opacity="0.4"/>
<path d="M803 547.60h7" stroke="#3c3c00" stroke-width="2.6" stroke-dasharray="1.1 0.9" opacity="0.7"/>
<rect x="802.5" y="545.5" width="8" height="4.2" fill="#ffff00" opacity="0.4"/>
<path d="M812.5 532.50h6.5" stroke="#3c3c00" stroke-width="2.6" stroke-dasharray="1.1 0.9" opacity="0.7"/>
<path d="M812.5 536.60h6.5" stroke="#3c3c00" stroke-width="2.6" stroke-dasharray="1.1 0.9" opacity="0.7"/>
<path d="M812.5 540.70h6.5" stroke="#3c3c00" stroke-width="2.6" stroke-dasharray="1.1 0.9" opacity="0.7"/>
<circle cx="846" cy="561" r="3" fill="none" stroke="#c8c8c8" stroke-width="0.8"/>
<circle cx="846" cy="690" r="3" fill="none" stroke="#c8c8c8" stroke-width="0.8"/>
<circle cx="973" cy="679" r="3" fill="none" stroke="#c8c8c8" stroke-width="0.8"/>
<circle cx="846" cy="561" r="3" fill="none" stroke="#c8c8c8" stroke-width="0.8"/>
<rect x="799.5" y="571.5" width="10.5" height="38.5" fill="#ffff00"/><rect x="811" y="571.5" width="10" height="38.5" fill="#ffff00"/>
<text x="806" y="597" font-size="3.12" fill="#3c3c00" font-weight="bold" transform="rotate(-90 806 597)">M402</text>
<text x="817" y="595" font-size="3.12" fill="#3c3c00" font-weight="bold" transform="rotate(-90 817 595)">M401</text>
<text x="799" y="615.5" font-size="2.88" fill="#3434c8" font-weight="bold">MIC402- MIC401+</text>
<text x="851" y="613" font-size="3.36" fill="#3434c8" font-weight="bold">SW1</text>
<text x="931" y="613" font-size="3.36" fill="#3434c8" font-weight="bold">SW2</text>
<path d="M802 638.50h8" stroke="#3c3c00" stroke-width="2.6" stroke-dasharray="1.1 0.9" opacity="0.7"/>
<rect x="801.5" y="636.4" width="9" height="4.2" fill="#ffff00" opacity="0.3"/>
<path d="M802 642.60h8" stroke="#3c3c00" stroke-width="2.6" stroke-dasharray="1.1 0.9" opacity="0.7"/>
<rect x="801.5" y="640.5" width="9" height="4.2" fill="#ffff00" opacity="0.3"/>
<path d="M802 646.70h8" stroke="#3c3c00" stroke-width="2.6" stroke-dasharray="1.1 0.9" opacity="0.7"/>
<rect x="801.5" y="644.6" width="9" height="4.2" fill="#ffff00" opacity="0.3"/>
<path d="M802 650.80h8" stroke="#3c3c00" stroke-width="2.6" stroke-dasharray="1.1 0.9" opacity="0.7"/>
<rect x="801.5" y="648.7" width="9" height="4.2" fill="#ffff00" opacity="0.3"/>
<path d="M802 654.90h10" stroke="#3c3c00" stroke-width="2.6" stroke-dasharray="1.1 0.9" opacity="0.7"/>
<rect x="801.5" y="652.8" width="11" height="4.2" fill="#ffff00" opacity="0.3"/>
<path d="M802 659.00h10" stroke="#3c3c00" stroke-width="2.6" stroke-dasharray="1.1 0.9" opacity="0.7"/>
<rect x="801.5" y="656.9" width="11" height="4.2" fill="#ffff00" opacity="0.3"/>
<path d="M802 663.10h10" stroke="#3c3c00" stroke-width="2.6" stroke-dasharray="1.1 0.9" opacity="0.7"/>
<rect x="801.5" y="661.0" width="11" height="4.2" fill="#ffff00" opacity="0.3"/>
<path d="M802 667.20h10" stroke="#3c3c00" stroke-width="2.6" stroke-dasharray="1.1 0.9" opacity="0.7"/>
<rect x="801.5" y="665.1" width="11" height="4.2" fill="#ffff00" opacity="0.3"/>
<path d="M802 671.30h10" stroke="#3c3c00" stroke-width="2.6" stroke-dasharray="1.1 0.9" opacity="0.7"/>
<rect x="801.5" y="669.2" width="11" height="4.2" fill="#ffff00" opacity="0.3"/>
<path d="M802 675.40h10" stroke="#3c3c00" stroke-width="2.6" stroke-dasharray="1.1 0.9" opacity="0.7"/>
<rect x="801.5" y="673.3" width="11" height="4.2" fill="#ffff00" opacity="0.3"/>
<path d="M802 679.50h10" stroke="#3c3c00" stroke-width="2.6" stroke-dasharray="1.1 0.9" opacity="0.7"/>
<rect x="801.5" y="677.4" width="11" height="4.2" fill="#ffff00" opacity="0.3"/>
<path d="M802 683.60h10" stroke="#3c3c00" stroke-width="2.6" stroke-dasharray="1.1 0.9" opacity="0.7"/>
<rect x="801.5" y="681.5" width="11" height="4.2" fill="#ffff00" opacity="0.3"/>
<path d="M802 687.70h10" stroke="#3c3c00" stroke-width="2.6" stroke-dasharray="1.1 0.9" opacity="0.7"/>
<rect x="801.5" y="685.6" width="11" height="4.2" fill="#ffff00" opacity="0.3"/>
<path d="M802 691.80h10" stroke="#3c3c00" stroke-width="2.6" stroke-dasharray="1.1 0.9" opacity="0.7"/>
<rect x="801.5" y="689.7" width="11" height="4.2" fill="#ffff00" opacity="0.3"/>
<path d="M802 695.90h10" stroke="#3c3c00" stroke-width="2.6" stroke-dasharray="1.1 0.9" opacity="0.7"/>
<rect x="801.5" y="693.8" width="11" height="4.2" fill="#ffff00" opacity="0.3"/>
<path d="M802 700.00h10" stroke="#3c3c00" stroke-width="2.6" stroke-dasharray="1.1 0.9" opacity="0.7"/>
<rect x="801.5" y="697.9" width="11" height="4.2" fill="#ffff00" opacity="0.3"/>
<path d="M802 704.10h10" stroke="#3c3c00" stroke-width="2.6" stroke-dasharray="1.1 0.9" opacity="0.7"/>
<rect x="801.5" y="702.0" width="11" height="4.2" fill="#ffff00" opacity="0.3"/>
<rect x="797" y="680" width="3" height="8" fill="#ffff00" opacity="0.6"/>
<text x="792" y="716" font-size="3.12" fill="#3c3c00" font-weight="bold">MIC401</text>
<rect x="792" y="711" width="13" height="6" fill="#ffff00" opacity="0.4"/>
<text x="809" y="713" font-size="3.12" fill="#3434c8" font-weight="bold">MIC+</text>
<text x="819.5" y="713" font-size="3.12" fill="#3434c8" font-weight="bold">MIC-</text>
<rect x="808" y="720.5" width="7.5" height="9" fill="#ffff00"/><rect x="817.5" y="720.5" width="7.5" height="9" fill="#ffff00"/>
<text x="830" y="733" font-size="4.8" fill="#3434c8" font-weight="bold" transform="rotate(-90 830 733)">DC-JACK</text>
<rect x="833.0" y="710" width="3.8" height="8" fill="#ffff00"/><path d="M833.5 712.5h2.8M833.5 715.5h2.8" stroke="#3c3c00" stroke-width="0.7"/>
<rect x="837.5" y="710" width="3.8" height="8" fill="#ffff00"/><path d="M838.0 712.5h2.8M838.0 715.5h2.8" stroke="#3c3c00" stroke-width="0.7"/>
<rect x="842.0" y="710" width="3.8" height="8" fill="#ffff00"/><path d="M842.5 712.5h2.8M842.5 715.5h2.8" stroke="#3c3c00" stroke-width="0.7"/>
<rect x="846.5" y="710" width="3.8" height="8" fill="#ffff00"/><path d="M847.0 712.5h2.8M847.0 715.5h2.8" stroke="#3c3c00" stroke-width="0.7"/>
<rect x="851" y="710" width="10" height="8" fill="#ffff00"/>
<text x="852" y="715.5" font-size="3.12" fill="#3c3c00" font-weight="bold">C10</text>
<rect x="864.5" y="714" width="6" height="10.5" fill="#ffff00"/>
<text x="862" y="713" font-size="2.88" fill="#3c3c00" font-weight="bold">T5000700</text>
<path d="M878 706h4l-2 2.5z" fill="#d83838"/>
<rect x="879.5" y="708.5" width="17.5" height="5.5" fill="#ffff00"/>
<text x="867.5" y="728" font-size="4.2" fill="#3434c8" font-weight="bold">+</text>
<path d="M839 734V722H862.5V734H859.5V756.5H840.5V734Z" fill="none" stroke="#d83838" stroke-width="1"/>
<rect x="840.7" y="734.7" width="18.6" height="21.9" fill="#ffff00"/>
<text x="848" y="734" font-size="2.88" fill="#3c3c00" font-weight="bold">J700</text>
<rect x="870.3" y="716" width="34.7" height="39.8" fill="none" stroke="#d83838" stroke-width="1.1"/>
<ellipse cx="871.5" cy="742.5" rx="3" ry="6" fill="#ffff00"/><ellipse cx="904" cy="742.5" rx="3" ry="6" fill="#ffff00"/>
<text x="883" y="745" font-size="3.12" fill="#3c3c00" font-weight="bold">J702</text>
<rect x="905" y="714" width="7" height="9" fill="#ffff00"/>
<text x="904" y="707" font-size="2.88" fill="#3c3c00" font-weight="bold" transform="rotate(-90 904 707)">FT00</text>
<text x="908" y="707" font-size="2.88" fill="#3c3c00" font-weight="bold" transform="rotate(-90 908 707)">BT00</text>
<text x="912" y="727" font-size="3.36" fill="#3c3c00" font-weight="bold">C503</text>
<rect x="907.5" y="730" width="4" height="12" fill="#ffff00"/>
<rect x="912" y="729" width="9.5" height="13.5" fill="#ffff00" stroke="#d83838" stroke-width="0.8"/>
<text x="918" y="740" font-size="2.88" fill="#3434c8" font-weight="bold" transform="rotate(-90 918 740)">J500</text>
<rect x="921.5" y="734" width="18" height="8" fill="#ffff00"/>
<text x="925" y="740.5" font-size="3.36" fill="#3c3c00" font-weight="bold">B500</text>
<rect x="924.2" y="704.3" width="40.2" height="20.3" fill="none" stroke="#d83838" stroke-width="1"/>
<ellipse cx="937.5" cy="710.5" rx="3" ry="5.5" fill="#ffff00"/><ellipse cx="951" cy="710.5" rx="3" ry="5.5" fill="#ffff00"/>
<text x="941" y="711.5" font-size="3.12" fill="#3c3c00" font-weight="bold">L500</text>
<rect x="927" y="720" width="7.5" height="7.5" fill="#ffff00"/><rect x="940.5" y="720" width="7.5" height="7.5" fill="#ffff00"/><rect x="954.5" y="720" width="7.5" height="7.5" fill="#ffff00"/>
<text x="930" y="734" font-size="2.88" fill="#3c3c00" font-weight="bold">T1000/0504</text>
<rect x="949" y="731" width="14" height="6" fill="#ffff00" stroke="#3c3c00" stroke-width="0.4"/>
<text x="951" y="735.5" font-size="3.12" fill="#3c3c00" font-weight="bold">B501</text>
<rect x="966" y="706" width="7.5" height="14" fill="#ffff00"/>
<text x="971" y="717" font-size="2.88" fill="#3c3c00" font-weight="bold" transform="rotate(-90 971 717)">C501</text>
<text x="916" y="695" font-size="4.8" fill="#3434c8" font-weight="bold">-</text>
<text x="925" y="694" font-size="4.8" fill="#3434c8" font-weight="bold">-</text>
<text x="943" y="696" font-size="4.8" fill="#3434c8" font-weight="bold">+</text>
<text x="957" y="701" font-size="4.8" fill="#3434c8" font-weight="bold">+</text>
<text x="967" y="705" font-size="4.8" fill="#3434c8" font-weight="bold">+</text>
<text x="964" y="697" font-size="3.5999999999999996" fill="#3434c8" font-weight="bold">A1</text>
</svg>
<div id="status" class="a"></div>
<div class="a m s" style="left:0;top:843px;font-size:11px;letter-spacing:-0.6px;color:#101010;line-height:14px">Version:1.0.0.52</div>
<div class="a m s" style="left:1249px;top:843px;font-size:11px;letter-spacing:-0.6px;color:#f4f4f4;line-height:14px">Current [A625_Main_PCB_V1.1_2 card_PLACEMENT]</div>
</body></html>
